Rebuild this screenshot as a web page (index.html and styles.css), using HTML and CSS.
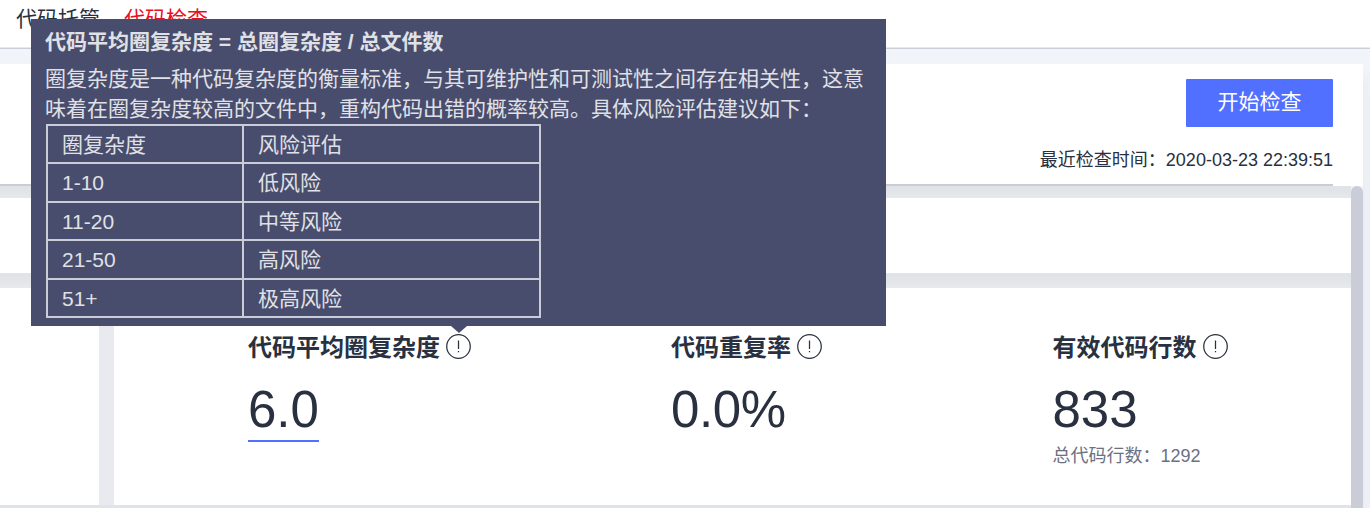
FILE: index.html
```html
<!DOCTYPE html>
<html lang="zh-CN">
<head>
<meta charset="utf-8">
<title>代码检查</title>
<link rel="stylesheet" href="styles.css">
</head>
<body>
<nav class="topbar">
  <a class="tab">代码托管</a>
  <a class="tab active">代码检查</a>
</nav>
<main class="page">
  <section class="panel">
    <div class="panel-inner">
      <button class="start">开始检查</button>
      <p class="time">最近检查时间：2020-03-23 22:39:51</p>
    </div>
  </section>
  <div class="scroll-area">
    <div class="cards">
      <section class="card summary"></section>
      <div class="card-row">
        <section class="card side"></section>
        <section class="card metrics">
          <div class="metric first">
            <h3 class="metric-title">代码平均圈复杂度
              <svg class="info" viewBox="0 0 24 24"><circle cx="12" cy="12" r="11.3"/><path d="M12 6.2v8.3M12 16.2v1.4"/></svg>
            </h3>
            <div class="value linked">6.0</div>
          </div>
          <div class="metric second">
            <h3 class="metric-title">代码重复率
              <svg class="info" viewBox="0 0 24 24"><circle cx="12" cy="12" r="11.3"/><path d="M12 6.2v8.3M12 16.2v1.4"/></svg>
            </h3>
            <div class="value percent">0.0%</div>
          </div>
          <div class="metric">
            <h3 class="metric-title">有效代码行数
              <svg class="info" viewBox="0 0 24 24"><circle cx="12" cy="12" r="11.3"/><path d="M12 6.2v8.3M12 16.2v1.4"/></svg>
            </h3>
            <div class="value">833</div>
            <p class="note">总代码行数：1292</p>
          </div>
        </section>
      </div>
    </div>
    <div class="scrollbar"></div>
  </div>
</main>
<aside class="tooltip">
  <h4 class="tip-title">代码平均圈复杂度 = 总圈复杂度 / 总文件数</h4>
  <p class="tip-text">圈复杂度是一种代码复杂度的衡量标准，与其可维护性和可测试性之间存在相关性，这意<br>味着在圈复杂度较高的文件中，重构代码出错的概率较高。具体风险评估建议如下：</p>
  <div class="risk-table">
    <div class="cell">圈复杂度</div><div class="cell">风险评估</div>
    <div class="cell">1-10</div><div class="cell">低风险</div>
    <div class="cell">11-20</div><div class="cell">中等风险</div>
    <div class="cell">21-50</div><div class="cell">高风险</div>
    <div class="cell">51+</div><div class="cell">极高风险</div>
  </div>
</aside>
</body>
</html>
```

FILE: styles.css
```css
* {
  box-sizing: border-box;
  margin: 0;
  padding: 0;
}

body {
  height: 508px;
  overflow: hidden;
  display: flex;
  flex-direction: column;
  background: #f1f5f9;
  color: #293040;
  font-family: "Liberation Sans", "Noto Sans CJK SC", sans-serif;
  font-size: 21px;
}

.topbar {
  flex: none;
  height: 49px;
  padding: 4px 16px 0;
  display: flex;
  gap: 24px;
  background: #fff;
  border-bottom: 1px solid #c9ced9;
  box-shadow: inset 0 -1px #e7e9eb;
  line-height: 30px;
}

.tab.active {
  color: #e60f24;
}

.page {
  flex: 1;
  min-height: 0;
  width: 1363px;
  margin-top: 15px;
  display: flex;
  flex-direction: column;
  box-shadow: 0 14px 16px rgba(41, 48, 64, 0.07);
}

.panel {
  flex: none;
  height: 122px;
  padding-right: 30px;
  background: #fff;
}

.panel-inner {
  height: 122px;
  padding-top: 15px;
  display: flex;
  flex-direction: column;
  align-items: flex-end;
  border-bottom: 2px solid #cacdd8;
}

.start {
  width: 147px;
  height: 48px;
  padding-bottom: 2px;
  border: 0;
  border-radius: 1px;
  background: #5170ff;
  color: #fff;
  font: inherit;
  line-height: 46px;
}

.time {
  margin-top: 19px;
  font-size: 18px;
  line-height: 28px;
}

.scroll-area {
  flex: 1;
  display: flex;
}

.cards {
  flex: 1;
  padding-top: 12px;
  display: flex;
  flex-direction: column;
  gap: 15px;
  background: linear-gradient(#dfe2e6, #e5e9eb 12px, #e5e9eb 87px, #dfe2e6 88px, #e7eaec 102px, #e7eaec 318px, #dfe4e8 319px);
}

.card {
  background: #fff;
}

.summary {
  height: 75px;
}

.card-row {
  height: 217px;
  display: grid;
  grid-template-columns: 99px 1fr;
  gap: 15px;
  background: #e9eaef;
}

.metrics {
  padding: 43px 0 0 134px;
  display: flex;
}

.metric.first {
  width: 423px;
}

.metric.second {
  width: 381.5px;
}

.metric-title {
  display: flex;
  align-items: center;
  gap: 6px;
  font-size: 24px;
  font-weight: 700;
  line-height: 34px;
}

.info {
  width: 25px;
  height: 25px;
  margin-top: -4px;
  fill: none;
  stroke: #293040;
  stroke-width: 1.2;
}

.value {
  width: max-content;
  margin-top: 14px;
  font-size: 51px;
  line-height: 62px;
}

.value.linked {
  height: 63px;
  border-bottom: 2px solid #5170ff;
}

.value.percent {
  letter-spacing: -0.4px;
}

.note {
  margin-top: 2px;
  color: #6b7082;
  font-size: 18px;
  line-height: 26px;
}

.scrollbar {
  width: 12px;
  border-radius: 6px 6px 0 0;
  background: #cacdd8;
}

.tooltip {
  position: absolute;
  left: 31px;
  top: 19px;
  width: 855px;
  height: 307px;
  padding: 8px 14px;
  background: #484d6d;
  color: #e0e1e6;
}

.tooltip::after {
  content: "";
  position: absolute;
  left: 420px;
  top: 100%;
  border: 8px solid transparent;
  border-top: 7px solid #484d6d;
  border-bottom: 0;
}

.tip-title {
  font-size: 21px;
  line-height: 30px;
}

.tip-text {
  margin-top: 7px;
  line-height: 30px;
  white-space: nowrap;
}

.risk-table {
  width: 495px;
  margin-left: 1px;
  padding: 2px;
  display: grid;
  grid-template-columns: 194px 295px;
  grid-template-rows: 36px 37px 36px 37px 36px;
  gap: 2px;
  background: #cacdd8;
}

.cell {
  padding: 2px 0 0 14px;
  background: #484d6d;
  line-height: 34px;
}
```
